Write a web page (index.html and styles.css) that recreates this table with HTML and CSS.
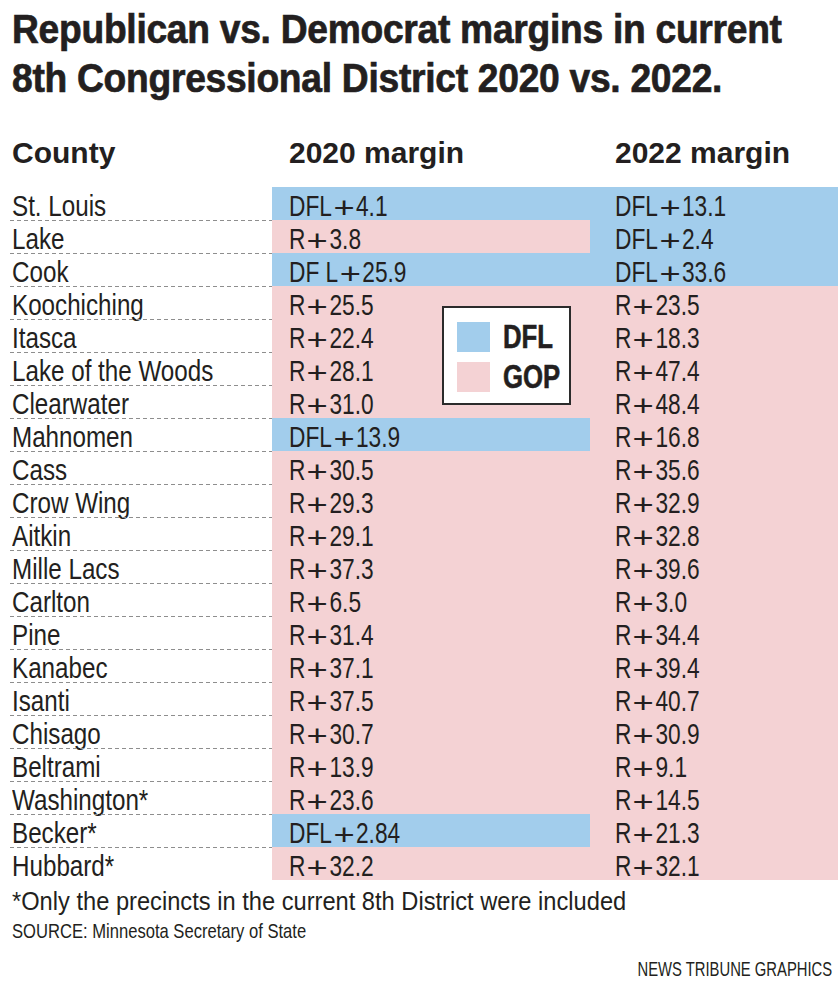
FILE: index.html
```html
<!DOCTYPE html>
<html lang="en">
<head>
<meta charset="utf-8">
<title>Republican vs. Democrat margins</title>
<link rel="stylesheet" href="styles.css">
</head>
<body>
<h1 class="title"><span class="title-text">Republican vs. Democrat margins in current<br>8th Congressional District 2020 vs. 2022.</span></h1>

<div class="head">
  <div class="hc county">County</div>
  <div class="hc">2020 margin</div>
  <div class="hc c3">2022 margin</div>
</div>

<div class="rows">
  <div class="row"><div class="c county"><span class="t">St. Louis</span></div><div class="c d"><span class="v">DFL<span class="pl">+</span>4.1</span></div><div class="c c3 d"><span class="v">DFL<span class="pl">+</span>13.1</span></div></div>
  <div class="row"><div class="c county"><span class="t">Lake</span></div><div class="c r"><span class="v">R<span class="pl">+</span>3.8</span></div><div class="c c3 d"><span class="v">DFL<span class="pl">+</span>2.4</span></div></div>
  <div class="row"><div class="c county"><span class="t">Cook</span></div><div class="c d"><span class="v">DF L<span class="pl">+</span>25.9</span></div><div class="c c3 d"><span class="v">DFL<span class="pl">+</span>33.6</span></div></div>
  <div class="row"><div class="c county"><span class="t">Koochiching</span></div><div class="c r"><span class="v">R<span class="pl">+</span>25.5</span></div><div class="c c3 r"><span class="v">R<span class="pl">+</span>23.5</span></div></div>
  <div class="row"><div class="c county"><span class="t">Itasca</span></div><div class="c r"><span class="v">R<span class="pl">+</span>22.4</span></div><div class="c c3 r"><span class="v">R<span class="pl">+</span>18.3</span></div></div>
  <div class="row"><div class="c county"><span class="t">Lake of the Woods</span></div><div class="c r"><span class="v">R<span class="pl">+</span>28.1</span></div><div class="c c3 r"><span class="v">R<span class="pl">+</span>47.4</span></div></div>
  <div class="row"><div class="c county"><span class="t">Clearwater</span></div><div class="c r"><span class="v">R<span class="pl">+</span>31.0</span></div><div class="c c3 r"><span class="v">R<span class="pl">+</span>48.4</span></div></div>
  <div class="row"><div class="c county"><span class="t">Mahnomen</span></div><div class="c d"><span class="v">DFL<span class="pl">+</span>13.9</span></div><div class="c c3 r"><span class="v">R<span class="pl">+</span>16.8</span></div></div>
  <div class="row"><div class="c county"><span class="t">Cass</span></div><div class="c r"><span class="v">R<span class="pl">+</span>30.5</span></div><div class="c c3 r"><span class="v">R<span class="pl">+</span>35.6</span></div></div>
  <div class="row"><div class="c county"><span class="t">Crow Wing</span></div><div class="c r"><span class="v">R<span class="pl">+</span>29.3</span></div><div class="c c3 r"><span class="v">R<span class="pl">+</span>32.9</span></div></div>
  <div class="row"><div class="c county"><span class="t">Aitkin</span></div><div class="c r"><span class="v">R<span class="pl">+</span>29.1</span></div><div class="c c3 r"><span class="v">R<span class="pl">+</span>32.8</span></div></div>
  <div class="row"><div class="c county"><span class="t">Mille Lacs</span></div><div class="c r"><span class="v">R<span class="pl">+</span>37.3</span></div><div class="c c3 r"><span class="v">R<span class="pl">+</span>39.6</span></div></div>
  <div class="row"><div class="c county"><span class="t">Carlton</span></div><div class="c r"><span class="v">R<span class="pl">+</span>6.5</span></div><div class="c c3 r"><span class="v">R<span class="pl">+</span>3.0</span></div></div>
  <div class="row"><div class="c county"><span class="t">Pine</span></div><div class="c r"><span class="v">R<span class="pl">+</span>31.4</span></div><div class="c c3 r"><span class="v">R<span class="pl">+</span>34.4</span></div></div>
  <div class="row"><div class="c county"><span class="t">Kanabec</span></div><div class="c r"><span class="v">R<span class="pl">+</span>37.1</span></div><div class="c c3 r"><span class="v">R<span class="pl">+</span>39.4</span></div></div>
  <div class="row"><div class="c county"><span class="t">Isanti</span></div><div class="c r"><span class="v">R<span class="pl">+</span>37.5</span></div><div class="c c3 r"><span class="v">R<span class="pl">+</span>40.7</span></div></div>
  <div class="row"><div class="c county"><span class="t">Chisago</span></div><div class="c r"><span class="v">R<span class="pl">+</span>30.7</span></div><div class="c c3 r"><span class="v">R<span class="pl">+</span>30.9</span></div></div>
  <div class="row"><div class="c county"><span class="t">Beltrami</span></div><div class="c r"><span class="v">R<span class="pl">+</span>13.9</span></div><div class="c c3 r"><span class="v">R<span class="pl">+</span>9.1</span></div></div>
  <div class="row"><div class="c county"><span class="t">Washington*</span></div><div class="c r"><span class="v">R<span class="pl">+</span>23.6</span></div><div class="c c3 r"><span class="v">R<span class="pl">+</span>14.5</span></div></div>
  <div class="row"><div class="c county"><span class="t">Becker*</span></div><div class="c d"><span class="v">DFL<span class="pl">+</span>2.84</span></div><div class="c c3 r"><span class="v">R<span class="pl">+</span>21.3</span></div></div>
  <div class="row"><div class="c county"><span class="t">Hubbard*</span></div><div class="c r"><span class="v">R<span class="pl">+</span>32.2</span></div><div class="c c3 r"><span class="v">R<span class="pl">+</span>32.1</span></div></div>

  <div class="legend">
    <span class="sw sw-d"></span><span class="lt"><span class="lts">DFL</span></span>
    <span class="sw sw-r"></span><span class="lt"><span class="lts">GOP</span></span>
  </div>
</div>

<p class="note"><span class="nt">*Only the precincts in the current 8th District were included</span></p>
<p class="source"><span class="st">SOURCE: Minnesota Secretary of State</span></p>
<p class="credit"><span class="ct">NEWS TRIBUNE GRAPHICS</span></p>
</body>
</html>
```

FILE: styles.css
```css
html, body {
  margin: 0;
  padding: 0;
  background: #ffffff;
  color: #231f20;
}

body {
  width: 840px;
  font-family: "Liberation Sans", Arial, sans-serif;
}

.title {
  margin: 5px 0 0;
  padding-left: 12px;
  font: 700 40px/49px "Liberation Sans", Arial, sans-serif;
  color: #231f20;
}

.title-text {
  display: block;
  width: max-content;
  white-space: nowrap;
  letter-spacing: -0.3px;
  -webkit-text-stroke: 0.7px #231f20;
  transform: scaleX(0.93);
  transform-origin: 0 0;
}

.head {
  display: grid;
  grid-template-columns: 272px 318px 248px;
  margin-top: 32px;
  height: 52px;
  font: 700 30px/36px "Liberation Sans", Arial, sans-serif;
}

.hc {
  padding-left: 17px;
  white-space: nowrap;
}

.head .county {
  padding-left: 12px;
}

.head .c3 {
  padding-left: 25px;
}

.rows {
  position: relative;
}

.row {
  position: relative;
  display: grid;
  grid-template-columns: 272px 318px 248px;
  height: 33px;
}

.row::after {
  content: "";
  position: absolute;
  left: 10px;
  right: 7px;
  bottom: -1px;
  height: 1px;
  background: repeating-linear-gradient(90deg, #8e8e8e 0 4px, transparent 4px 7px);
}

.row:nth-child(21)::after {
  display: none;
}

.c {
  box-sizing: border-box;
  height: 33px;
  padding: 5px 0 0 17px;
  font-size: 29.5px;
  line-height: 28px;
  white-space: nowrap;
}

.c.county {
  padding-left: 12px;
}

.c.c3 {
  padding-left: 25px;
}

.d {
  background: #a2cdec;
}

.r {
  background: #f4d2d4;
}

.t {
  display: inline-block;
  transform: scaleX(0.82);
  transform-origin: 0 50%;
}

.v {
  display: inline-block;
  transform: scaleX(0.77);
  transform-origin: 0 50%;
}

.pl {
  display: inline-block;
  margin: 0 7px;
  transform: translateY(2px) scaleX(1.6);
  transform-origin: 50% 50%;
}

.legend {
  position: absolute;
  z-index: 2;
  left: 442px;
  top: 119px;
  box-sizing: border-box;
  width: 129px;
  height: 99px;
  padding: 14px 0 0 13px;
  background: #ffffff;
  border: 2px solid #2b2b2b;
  display: grid;
  grid-template-columns: 33px auto;
  grid-auto-rows: 30px;
  column-gap: 13px;
  row-gap: 10px;
  align-items: center;
}

.sw {
  display: block;
  width: 33px;
  height: 30px;
}

.sw-d {
  background: #a2cdec;
}

.sw-r {
  background: #f4d2d4;
}

.lt {
  font: 700 33px/30px "Liberation Sans", Arial, sans-serif;
  white-space: nowrap;
}

.lts {
  display: inline-block;
  -webkit-text-stroke: 0.6px #231f20;
  transform: scaleX(0.78);
  transform-origin: 0 50%;
}

.note {
  margin: 6px 0 0;
  padding-left: 12px;
  font-size: 26.5px;
  line-height: 30px;
  white-space: nowrap;
}

.nt {
  display: inline-block;
  transform: scaleX(0.893);
  transform-origin: 0 50%;
}

.source {
  margin: 3px 0 0;
  padding-left: 12px;
  font-size: 21px;
  line-height: 24px;
  white-space: nowrap;
}

.st {
  display: inline-block;
  transform: scaleX(0.79);
  transform-origin: 0 50%;
}

.credit {
  margin: 14px 0 0;
  padding-right: 8px;
  text-align: right;
  font-size: 21px;
  line-height: 24px;
  white-space: nowrap;
}

.ct {
  display: inline-block;
  transform: scaleX(0.705);
  transform-origin: 100% 50%;
}
```
